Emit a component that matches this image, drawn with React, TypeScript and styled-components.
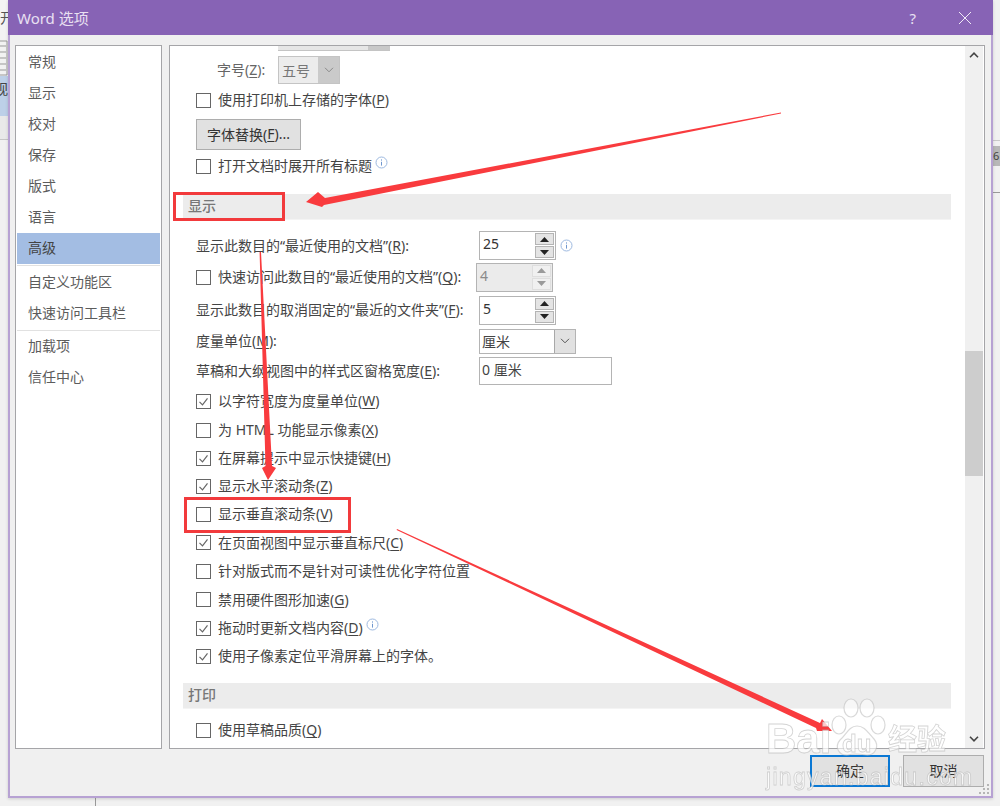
import styled, { createGlobalStyle } from "styled-components";

const GlobalStyle = createGlobalStyle`
  html, body { margin: 0; padding: 0; }
  body {
    width: 1000px;
    height: 806px;
    overflow: hidden;
    background: #f1f1f1;
    font-family: "Noto Sans", "Noto Sans CJK SC", sans-serif;
    font-size: 14px;
    color: #444;
  }
  * { box-sizing: border-box; }
  u { text-underline-offset: 2px; }
`;

const navTop = ["常规", "显示", "校对", "保存", "版式", "语言", "高级"];
const navMid = ["自定义功能区", "快速访问工具栏"];
const navEnd = ["加载项", "信任中心"];

const lower = [
  { text: "以字符宽度为度量单位", key: "W", on: true, h: 30 },
  { text: "为 HTML 功能显示像素", key: "X", on: false, h: 28 },
  { text: "在屏幕提示中显示快捷键", key: "H", on: true, h: 28 },
  { text: "显示水平滚动条", key: "Z", on: true, h: 28 },
  { text: "显示垂直滚动条", key: "V", on: false, h: 28 },
  { text: "在页面视图中显示垂直标尺", key: "C", on: true, h: 29 },
  { text: "针对版式而不是针对可读性优化字符位置", key: "", on: false, h: 28 },
  { text: "禁用硬件图形加速", key: "G", on: false, h: 29 },
];

function Info() {
  return (
    <InfoMark width="13" height="13" viewBox="0 0 13 13">
      <circle cx="6.5" cy="6.5" r="5.5" fill="none" stroke="#9db9e0" strokeWidth="1" />
      <path d="M6.5 3.4v1.2M6.5 5.8v3.8" stroke="#6f97cf" strokeWidth="1" fill="none" />
    </InfoMark>
  );
}

function Check({ on }: { on?: boolean }) {
  return (
    <CheckBox>
      {on && (
        <svg width="13" height="13" viewBox="0 0 13 13">
          <path d="M2.5 6.8l3 3 5-6.4" fill="none" stroke="#666" strokeWidth="1.2" />
        </svg>
      )}
    </CheckBox>
  );
}

function Spin({ value, disabled }: { value: string; disabled?: boolean }) {
  const arrow = disabled ? "#9a9a9a" : "#222";
  return (
    <SpinBox $disabled={disabled}>
      <SpinValue>{value}</SpinValue>
      <SpinButtons>
        <SpinButton $disabled={disabled}>
          <svg width="9" height="5" viewBox="0 0 9 5">
            <path d="M4.5 0L9 5H0z" fill={arrow} />
          </svg>
        </SpinButton>
        <SpinButton $disabled={disabled}>
          <svg width="9" height="5" viewBox="0 0 9 5">
            <path d="M0 0h9L4.5 5z" fill={arrow} />
          </svg>
        </SpinButton>
      </SpinButtons>
    </SpinBox>
  );
}

function Chevron({ color }: { color: string }) {
  return (
    <svg width="10" height="6" viewBox="0 0 10 6">
      <path d="M1 .8l4 4 4-4" fill="none" stroke={color} strokeWidth="1" />
    </svg>
  );
}

export default function App() {
  return (
    <Screen>
      <GlobalStyle />
      <BackdropLeft>
        <BackTitle>开</BackTitle>
        <BackRibbon>
          <svg width="8" height="36" viewBox="0 0 8 36">
            <path d="M0 6h6M0 12h6M0 18h6M0 24h6M0 30h6" stroke="#999" />
            <path d="M0 1h7v34H0" fill="none" stroke="#9a9a9a" />
          </svg>
          <BackTab>视</BackTab>
        </BackRibbon>
      </BackdropLeft>
      <BackdropRight>
        <BackNumber>6</BackNumber>
      </BackdropRight>
      <BackdropBottom />

      <Window>
        <TitleBar>
          <WindowTitle>Word 选项</WindowTitle>
          <TitleActions>
            <HelpMark>?</HelpMark>
            <svg width="14" height="14" viewBox="0 0 14 14">
              <path d="M1 1l12 12M13 1L1 13" stroke="#f1ebf7" strokeWidth="1" fill="none" />
            </svg>
          </TitleActions>
        </TitleBar>

        <Main>
          <Nav>
            {navTop.map((n) => (
              <NavItem key={n} $active={n === "高级"}>
                {n}
              </NavItem>
            ))}
            <NavRule $after={1} />
            {navMid.map((n) => (
              <NavItem key={n}>{n}</NavItem>
            ))}
            <NavRule $after={0} />
            {navEnd.map((n) => (
              <NavItem key={n}>{n}</NavItem>
            ))}
          </Nav>

          <Panel>
            <Content>
              <SliverSelect />
              <Row $h={28} $mt={5}>
                <SizeLabel>
                  字号(<u>Z</u>):
                </SizeLabel>
                <SizeSelect>
                  五号
                  <SizeArrow>
                    <Chevron color="#8a8a8a" />
                  </SizeArrow>
                </SizeSelect>
              </Row>
              <Row $h={28} $mt={2}>
                <Check />
                <CheckLabel>
                  使用打印机上存储的字体(<u>P</u>)
                </CheckLabel>
              </Row>
              <Row $h={31} $mt={5}>
                <GrayButton>
                  字体替换(<u>F</u>)...
                </GrayButton>
              </Row>
              <Row $h={28} $mt={2}>
                <Check />
                <CheckLabel>打开文档时展开所有标题</CheckLabel>
                <Info />
              </Row>

              <Section $mt={14}>显示</Section>

              <Row $h={29} $mt={11}>
                <FieldLabel>
                  显示此数目的“最近使用的文档”(<u>R</u>):
                </FieldLabel>
                <Spin value="25" />
                <SpinInfo>
                  <Info />
                </SpinInfo>
              </Row>
              <Row $h={34}>
                <Check />
                <ShortFieldLabel>
                  快速访问此数目的“最近使用的文档”(<u>Q</u>):
                </ShortFieldLabel>
                <Spin value="4" disabled />
              </Row>
              <Row $h={32}>
                <FieldLabel>
                  显示此数目的取消固定的“最近的文件夹”(<u>F</u>):
                </FieldLabel>
                <Spin value="5" />
              </Row>
              <Row $h={30}>
                <FieldLabel>
                  度量单位(<u>M</u>):
                </FieldLabel>
                <UnitSelect>
                  厘米
                  <UnitArrow>
                    <Chevron color="#555" />
                  </UnitArrow>
                </UnitSelect>
              </Row>
              <Row $h={30}>
                <FieldLabel>
                  草稿和大纲视图中的样式区窗格宽度(<u>E</u>):
                </FieldLabel>
                <TextField>0 厘米</TextField>
              </Row>

              {lower.map((r) => (
                <Row key={r.text} $h={r.h}>
                  <Check on={r.on} />
                  <CheckLabel>
                    {r.text}
                    {r.key && (
                      <>
                        (<u>{r.key}</u>)
                      </>
                    )}
                  </CheckLabel>
                </Row>
              ))}
              <Row $h={28}>
                <Check on />
                <CheckLabel>
                  拖动时更新文档内容(<u>D</u>)
                </CheckLabel>
                <Info />
              </Row>
              <Row $h={28}>
                <Check on />
                <CheckLabel>使用子像素定位平滑屏幕上的字体。</CheckLabel>
              </Row>

              <Section $mt={13}>打印</Section>

              <Row $h={28} $mt={7}>
                <Check />
                <CheckLabel>
                  使用草稿品质(<u>Q</u>)
                </CheckLabel>
              </Row>
            </Content>

            <ScrollBar>
              <ScrollEnd>
                <svg width="10" height="6" viewBox="0 0 10 6">
                  <path d="M1 5.2l4-4 4 4" fill="none" stroke="#444" strokeWidth="1.6" />
                </svg>
              </ScrollEnd>
              <ScrollTrack>
                <ScrollThumb />
              </ScrollTrack>
              <ScrollEnd>
                <svg width="10" height="6" viewBox="0 0 10 6">
                  <path d="M1 .8l4 4 4-4" fill="none" stroke="#444" strokeWidth="1.6" />
                </svg>
              </ScrollEnd>
            </ScrollBar>
          </Panel>
        </Main>

        <Footer>
          <DialogButton $primary>确定</DialogButton>
          <DialogButton $wide>取消</DialogButton>
        </Footer>
        <Grip width="12" height="12" viewBox="0 0 12 12">
          <path d="M9 1h2v2H9zM5 5h2v2H5zM9 5h2v2H9zM1 9h2v2H1zM5 9h2v2H5zM9 9h2v2H9z" fill="#b5b5b5" />
        </Grip>
      </Window>

      {/* 标注：红框和箭头 */}
      <RedBox $x={173} $y={192} $w={112} $h={29} />
      <RedBox $x={184} $y={497} $w={167} $h={36} />
      <Arrows width="1000" height="806" viewBox="0 0 1000 806">
        <path d="M781 112.5L325 198L318 192L306 202L322 207L324 205L781 113.5Z" fill="#f93b3e" />
        <path d="M259.6 252L265.5 466L262 468L268 480L276 468L272 466L261 252Z" fill="#f93b3e" />
        <path d="M397 529L820 723L822 719L832 731L817 731L816 728L396.6 530Z" fill="#f93b3e" />
      </Arrows>

      <Watermark>
        <MarkRow>
          <MarkBig>Bai</MarkBig>
          <Paw width="62" height="66" viewBox="0 0 62 66">
            <g fill="rgba(255,255,255,.6)" stroke="rgba(185,185,185,.55)" strokeWidth="1.2">
              <ellipse cx="13" cy="29" rx="7" ry="9" />
              <ellipse cx="25" cy="12" rx="7" ry="9" />
              <ellipse cx="41" cy="12" rx="7" ry="9" />
              <ellipse cx="52" cy="29" rx="7" ry="9" />
              <path d="M31 30c8 0 11 7 17 13 6 7 1 17-8 16-6-1-12-2-18 0-9 1-14-8-8-15 6-5 9-14 17-14z" />
            </g>
          </Paw>
          <MarkDu>du</MarkDu>
          <MarkCn>经验</MarkCn>
        </MarkRow>
        <MarkUrl>jingyan.baidu.com</MarkUrl>
      </Watermark>
    </Screen>
  );
}

const Screen = styled.div`
  position: relative;
  width: 1000px;
  height: 806px;
  overflow: hidden;
  filter: blur(0.35px);
`;

const BackdropLeft = styled.div`
  position: absolute;
  left: 0;
  top: 0;
  width: 8px;
  height: 140px;
  background: #e9e9e9;
  border-bottom: 1px solid #c6c6c6;
  overflow: hidden;
`;

const BackTitle = styled.div`
  height: 40px;
  line-height: 36px;
  color: #555;
  white-space: nowrap;
  background: #f3f3f3;
`;

const BackRibbon = styled.div`
  height: 76px;
  background: #bdd0e8;
  overflow: hidden;
  svg { display: block; background: #f2f2f2; }
`;

const BackTab = styled.div`
  height: 40px;
  line-height: 26px;
  margin-left: -6px;
  color: #444;
`;

const BackdropRight = styled.div`
  position: absolute;
  right: 0;
  top: 140px;
  width: 7px;
  height: 53px;
  border-top: 1px solid #c9c9c9;
  border-bottom: 1px solid #9a9a9a;
`;

const BackNumber = styled.div`
  margin-top: 5px;
  height: 20px;
  line-height: 20px;
  font-size: 11px;
  background: #b8b8b8;
  color: #444;
`;

const BackdropBottom = styled.div`
  position: absolute;
  left: 95px;
  top: 798px;
  width: 1px;
  height: 8px;
  background: #999;
`;

const Window = styled.div`
  position: absolute;
  left: 8px;
  top: 0;
  width: 985px;
  height: 798px;
  display: flex;
  flex-direction: column;
  background: #f0f0f0;
  border: 2px solid #b7a2d3;
  border-top: 0;
  box-shadow: 0 1px 3px rgba(0, 0, 0, 0.15);
`;

const TitleBar = styled.div`
  height: 35px;
  margin: 0 -2px;
  padding: 0 21px 0 9px;
  flex: none;
  display: flex;
  align-items: center;
  justify-content: space-between;
  background: #8763b5;
`;

const WindowTitle = styled.div`
  font-size: 15px;
  color: #e9e0f2;
`;

const TitleActions = styled.div`
  display: flex;
  align-items: center;
  gap: 42px;
`;

const HelpMark = styled.span`
  font-size: 15px;
  color: #e9e0f2;
`;

const Main = styled.div`
  height: 704px;
  flex: none;
  margin-top: 10px;
  padding: 0 6px 0 5px;
  display: flex;
  gap: 7px;
`;

const Nav = styled.div`
  width: 147px;
  flex: none;
  padding: 1px;
  background: #fff;
  border: 1px solid #a5a5a8;
`;

const NavItem = styled.div<{ $active?: boolean }>`
  height: 31px;
  line-height: 29px;
  padding-left: 11px;
  color: ${(p) => (p.$active ? "#444" : "#5c5c5c")};
  background: ${(p) => (p.$active ? "#a3bde3" : "transparent")};
`;

const NavRule = styled.div<{ $after: number }>`
  height: 1px;
  margin: 1px 0 ${(p) => p.$after}px;
  background: #e1e1e1;
`;

const Panel = styled.div`
  flex: 1;
  display: flex;
  background: #fff;
  border: 1px solid #a5a5a8;
`;

const Content = styled.div`
  flex: 1;
  overflow: hidden;
  padding-top: 0;
`;

const SliverSelect = styled.div`
  width: 112px;
  height: 5px;
  margin-left: 108px;
  background: linear-gradient(to right, #e6e6e6 80%, #c8c8c8 80%);
  border-bottom: 1px solid #c4c4c4;
`;

const Row = styled.div<{ $h: number; $mt?: number }>`
  height: ${(p) => p.$h}px;
  margin-top: ${(p) => p.$mt ?? 0}px;
  padding-left: 26px;
  display: flex;
  align-items: center;
  white-space: nowrap;
`;

const SizeLabel = styled.span`
  width: 82px;
  padding: 0 0 2px 21px;
  color: #666;
`;

const SizeSelect = styled.div`
  width: 62px;
  height: 28px;
  padding-left: 3px;
  display: flex;
  align-items: center;
  justify-content: space-between;
  color: #777;
  background: #ececec;
  border: 1px solid #c4c4c4;
`;

const SizeArrow = styled.div`
  width: 21px;
  height: 100%;
  display: flex;
  align-items: center;
  justify-content: center;
  background: #cacaca;
`;

const CheckBox = styled.span`
  width: 15px;
  height: 15px;
  flex: none;
  display: flex;
  align-items: center;
  justify-content: center;
  background: #fff;
  border: 1px solid #666;
`;

const CheckLabel = styled.span`
  margin-left: 7px;
  padding-bottom: 2px;
`;

const GrayButton = styled.div`
  width: 105px;
  height: 31px;
  padding-bottom: 2px;
  display: flex;
  align-items: center;
  justify-content: center;
  background: #e1e1e1;
  border: 1px solid #adadad;
  color: #333;
`;

const InfoMark = styled.svg`
  flex: none;
  margin: -7px 0 0 3px;
`;

const SpinInfo = styled.span`
  display: flex;
  margin: 7px 0 0 1px;
`;

const Section = styled.div<{ $mt: number }>`
  width: 768px;
  height: 26px;
  margin: ${(p) => p.$mt}px 0 0 13px;
  padding-left: 5px;
  line-height: 23px;
  color: #777;
  font-weight: 500;
  background: #ececec;
  border-bottom: 1px solid #f4f4f4;
`;

const FieldLabel = styled.span`
  width: 283px;
  flex: none;
  padding-bottom: 2px;
`;

const ShortFieldLabel = styled.span`
  width: 258px;
  flex: none;
  margin-left: 7px;
  padding-bottom: 2px;
`;

const SpinBox = styled.div<{ $disabled?: boolean }>`
  width: 77px;
  height: 29px;
  padding: 1px;
  display: flex;
  align-items: stretch;
  color: ${(p) => (p.$disabled ? "#8a8a8a" : "#333")};
  background: ${(p) => (p.$disabled ? "#ebebeb" : "#fff")};
  border: 1px solid #b4b4b4;
`;

const SpinValue = styled.span`
  flex: 1;
  padding-left: 2px;
  line-height: 22px;
`;

const SpinButtons = styled.div`
  width: 19px;
  display: flex;
  flex-direction: column;
  gap: 1px;
`;

const SpinButton = styled.div<{ $disabled?: boolean }>`
  flex: 1;
  display: flex;
  align-items: center;
  justify-content: center;
  background: ${(p) => (p.$disabled ? "#f0f0f0" : "#e4e4e4")};
  border: 1px solid ${(p) => (p.$disabled ? "#dedede" : "#b4b4b4")};
`;

const UnitSelect = styled.div`
  width: 97px;
  height: 25px;
  padding: 0 0 0 2px;
  display: flex;
  align-items: center;
  justify-content: space-between;
  background: #fff;
  border: 1px solid #b4b4b4;
`;

const UnitArrow = styled.div`
  width: 21px;
  height: 100%;
  display: flex;
  align-items: center;
  justify-content: center;
  background: #e1e1e1;
  border-left: 1px solid #a8a8a8;
`;

const TextField = styled.div`
  width: 133px;
  height: 28px;
  padding-left: 2px;
  line-height: 23px;
  background: #fff;
  border: 1px solid #b4b4b4;
`;

const ScrollBar = styled.div`
  width: 18px;
  flex: none;
  margin-right: 1px;
  display: flex;
  flex-direction: column;
  background: #f0f0f0;
`;

const ScrollEnd = styled.div`
  height: 18px;
  flex: none;
  display: flex;
  align-items: center;
  justify-content: center;
`;

const ScrollTrack = styled.div`
  flex: 1;
  padding-top: 287px;
`;

const ScrollThumb = styled.div`
  height: 125px;
  background: #cdcdcd;
`;

const Footer = styled.div`
  flex: 1;
  padding: 6px 7px 0 0;
  display: flex;
  justify-content: flex-end;
  align-items: flex-start;
  gap: 13px;
`;

const DialogButton = styled.div<{ $primary?: boolean; $wide?: boolean }>`
  width: ${(p) => (p.$wide ? 81 : 80)}px;
  height: 32px;
  padding-bottom: 2px;
  display: flex;
  align-items: center;
  justify-content: center;
  color: #333;
  background: #e1e1e1;
  border: ${(p) => (p.$primary ? "2px solid #0a78d4" : "1px solid #adadad")};
`;

const Grip = styled.svg`
  position: absolute;
  right: 1px;
  bottom: 1px;
`;

const RedBox = styled.div<{ $x: number; $y: number; $w: number; $h: number }>`
  position: absolute;
  left: ${(p) => p.$x}px;
  top: ${(p) => p.$y}px;
  width: ${(p) => p.$w}px;
  height: ${(p) => p.$h}px;
  border: 3px solid #f23a3c;
`;

const Arrows = styled.svg`
  position: absolute;
  left: 0;
  top: 0;
  pointer-events: none;
`;

const Watermark = styled.div`
  position: absolute;
  left: 766px;
  top: 696px;
  width: 200px;
  color: rgba(255, 255, 255, 0.72);
  -webkit-text-stroke: 0.8px rgba(175, 175, 175, 0.55);
  font-family: "Liberation Sans", "Noto Sans CJK SC", sans-serif;
`;

const MarkRow = styled.div`
  height: 66px;
  display: flex;
  align-items: flex-end;
`;

const MarkBig = styled.span`
  width: 62px;
  font-size: 42px;
  line-height: 46px;
  font-weight: 700;
`;

const MarkDu = styled.span`
  font-size: 24px;
  line-height: 36px;
  font-weight: 700;
  margin-left: -46px;
  width: 46px;
`;

const Paw = styled.svg`
  flex: none;
  margin-left: -2px;
`;

const MarkCn = styled.span`
  font-size: 29px;
  line-height: 44px;
  font-weight: 700;
  white-space: nowrap;
`;

const MarkUrl = styled.div`
  margin-top: 3px;
  font-size: 23px;
  line-height: 24px;
  letter-spacing: 1.3px;
  white-space: nowrap;
`;
